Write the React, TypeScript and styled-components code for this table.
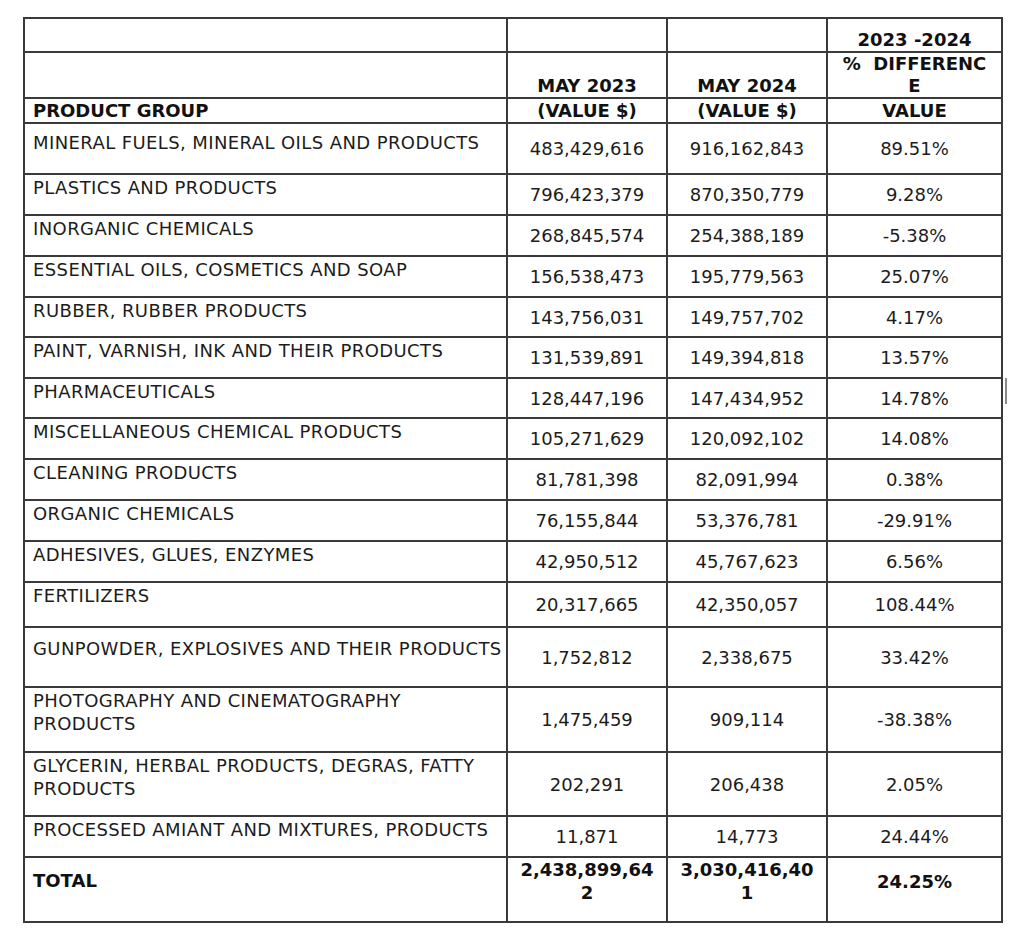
import React from "react";
import styled, { createGlobalStyle } from "styled-components";

const GlobalStyle = createGlobalStyle`
  html, body {
    margin: 0;
    padding: 0;
    background: #ffffff;
  }
  body {
    font-family: "DejaVu Sans", Verdana, sans-serif;
    color: #1c1c1c;
  }
`;

const Page = styled.div`
  position: relative;
  width: 1024px;
  height: 950px;
  padding: 17px 0 0 23px;
  box-sizing: border-box;
`;

const Table = styled.table`
  border-collapse: collapse;
  table-layout: fixed;
  width: 980px;
  font-family: "DejaVu Sans", Verdana, sans-serif;
  font-size: 18px;
  color: #1c1c1c;
`;

const Row = styled.tr<{ $h: number }>`
  height: ${(p) => p.$h}px;
`;

const HeadCell = styled.td<{ $align?: "left" | "center" }>`
  border: 2px solid #3a3a3a;
  padding: 0 ${(p) => (p.$align === "left" ? "6px 0 8px" : "4px")};
  text-align: ${(p) => p.$align ?? "center"};
  vertical-align: bottom;
  font-weight: bold;
  line-height: 22px;
  color: #111;
  white-space: nowrap;
`;

const NameCell = styled.td<{ $pad: number; $bold?: boolean }>`
  border: 2px solid #3a3a3a;
  padding: ${(p) => p.$pad}px 0 0 8px;
  vertical-align: top;
  text-align: left;
  line-height: 23px;
  letter-spacing: ${(p) => (p.$bold ? "0" : "0.4px")};
  font-weight: ${(p) => (p.$bold ? "bold" : "normal")};
  color: ${(p) => (p.$bold ? "#111" : "#1c1c1c")};
  white-space: nowrap;
`;

const ValueCell = styled.td<{ $bold?: boolean; $padBottom?: number }>`
  border: 2px solid #3a3a3a;
  padding: 0 2px ${(p) => p.$padBottom ?? 0}px;
  vertical-align: middle;
  text-align: center;
  line-height: 23px;
  font-weight: ${(p) => (p.$bold ? "bold" : "normal")};
  color: ${(p) => (p.$bold ? "#111" : "#1c1c1c")};
  white-space: nowrap;
`;

const ScanMark = styled.span`
  position: absolute;
  left: 1005px;
  top: 378px;
  width: 2px;
  height: 26px;
  background: #8a8a8a;
`;

type DataRow = {
  name: React.ReactNode;
  a: string;
  b: string;
  pct: string;
  h: number;
  pad: number;
};

const rows: DataRow[] = [
  { name: "MINERAL FUELS, MINERAL OILS AND PRODUCTS", a: "483,429,616", b: "916,162,843", pct: "89.51%", h: 51, pad: 7 },
  { name: "PLASTICS AND PRODUCTS", a: "796,423,379", b: "870,350,779", pct: "9.28%", h: 41, pad: 1 },
  { name: "INORGANIC CHEMICALS", a: "268,845,574", b: "254,388,189", pct: "-5.38%", h: 41, pad: 1 },
  { name: "ESSENTIAL OILS, COSMETICS AND SOAP", a: "156,538,473", b: "195,779,563", pct: "25.07%", h: 41, pad: 1 },
  { name: "RUBBER, RUBBER PRODUCTS", a: "143,756,031", b: "149,757,702", pct: "4.17%", h: 40, pad: 1 },
  { name: "PAINT, VARNISH, INK AND THEIR PRODUCTS", a: "131,539,891", b: "149,394,818", pct: "13.57%", h: 41, pad: 1 },
  { name: "PHARMACEUTICALS", a: "128,447,196", b: "147,434,952", pct: "14.78%", h: 40, pad: 1 },
  { name: "MISCELLANEOUS CHEMICAL PRODUCTS", a: "105,271,629", b: "120,092,102", pct: "14.08%", h: 41, pad: 1 },
  { name: "CLEANING PRODUCTS", a: "81,781,398", b: "82,091,994", pct: "0.38%", h: 41, pad: 1 },
  { name: "ORGANIC CHEMICALS", a: "76,155,844", b: "53,376,781", pct: "-29.91%", h: 41, pad: 1 },
  { name: "ADHESIVES, GLUES, ENZYMES", a: "42,950,512", b: "45,767,623", pct: "6.56%", h: 41, pad: 1 },
  { name: "FERTILIZERS", a: "20,317,665", b: "42,350,057", pct: "108.44%", h: 45, pad: 1 },
  { name: "GUNPOWDER, EXPLOSIVES AND THEIR PRODUCTS", a: "1,752,812", b: "2,338,675", pct: "33.42%", h: 60, pad: 9 },
  {
    name: (
      <>
        PHOTOGRAPHY AND CINEMATOGRAPHY
        <br />
        PRODUCTS
      </>
    ),
    a: "1,475,459",
    b: "909,114",
    pct: "-38.38%",
    h: 65,
    pad: 1,
  },
  {
    name: (
      <>
        GLYCERIN, HERBAL PRODUCTS, DEGRAS, FATTY
        <br />
        PRODUCTS
      </>
    ),
    a: "202,291",
    b: "206,438",
    pct: "2.05%",
    h: 64,
    pad: 1,
  },
  { name: "PROCESSED AMIANT AND MIXTURES, PRODUCTS", a: "11,871", b: "14,773", pct: "24.44%", h: 41, pad: 1 },
];

export default function App() {
  return (
    <>
      <GlobalStyle />
      <Page>
        <Table>
          <colgroup>
            <col style={{ width: 483 }} />
            <col style={{ width: 160 }} />
            <col style={{ width: 160 }} />
            <col style={{ width: 175 }} />
          </colgroup>
          <thead>
            <Row $h={34}>
              <HeadCell $align="left" />
              <HeadCell />
              <HeadCell />
              <HeadCell>2023 -2024</HeadCell>
            </Row>
            <Row $h={46}>
              <HeadCell $align="left" />
              <HeadCell>MAY 2023</HeadCell>
              <HeadCell>MAY 2024</HeadCell>
              <HeadCell>
                %&nbsp; DIFFERENC
                <br />E
              </HeadCell>
            </Row>
            <Row $h={25}>
              <HeadCell $align="left">PRODUCT GROUP</HeadCell>
              <HeadCell>(VALUE $)</HeadCell>
              <HeadCell>(VALUE $)</HeadCell>
              <HeadCell>VALUE</HeadCell>
            </Row>
          </thead>
          <tbody>
            {rows.map((r, i) => (
              <Row key={i} $h={r.h}>
                <NameCell $pad={r.pad}>{r.name}</NameCell>
                <ValueCell>{r.a}</ValueCell>
                <ValueCell>{r.b}</ValueCell>
                <ValueCell>{r.pct}</ValueCell>
              </Row>
            ))}
            <Row $h={64}>
              <NameCell $pad={11} $bold>
                TOTAL
              </NameCell>
              <ValueCell $bold $padBottom={17}>
                2,438,899,64
                <br />2
              </ValueCell>
              <ValueCell $bold $padBottom={17}>
                3,030,416,40
                <br />1
              </ValueCell>
              <ValueCell $bold $padBottom={17}>
                24.25%
              </ValueCell>
            </Row>
          </tbody>
        </Table>
        <ScanMark />
      </Page>
    </>
  );
}
